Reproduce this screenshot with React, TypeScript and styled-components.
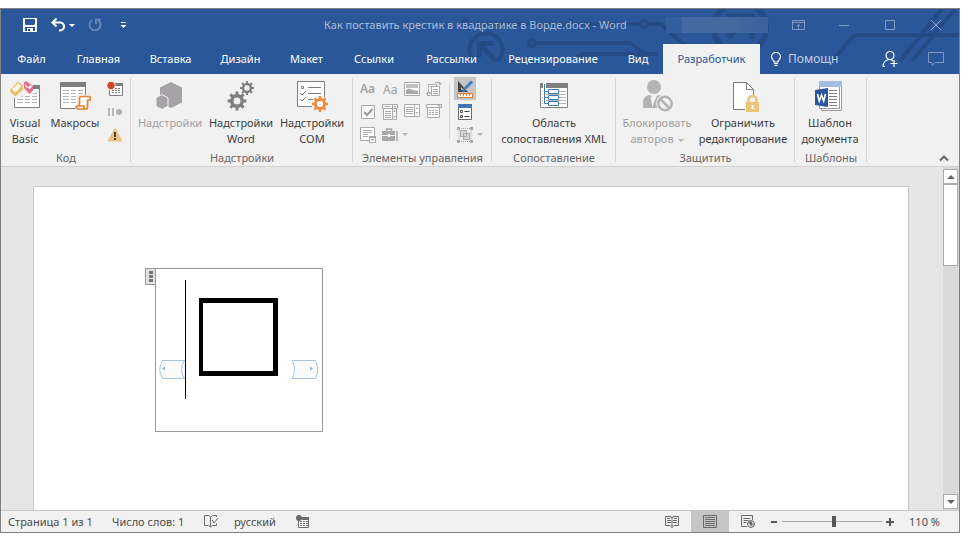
import React from "react";
import styled, { createGlobalStyle, css } from "styled-components";

const GlobalStyle = createGlobalStyle`
  *, *::before, *::after { box-sizing: border-box; }
  html, body, #root { height: 100%; }
  body {
    margin: 0;
    background: #fff;
    color: #3c3c3c;
    font: 11px/16px "Noto Sans", "Open Sans", sans-serif;
  }
  button, input {
    font: inherit;
    color: inherit;
    margin: 0;
    padding: 0;
    border: 0;
    background: none;
  }
`;

const Window = styled.main`
  display: flex;
  flex-direction: column;
  height: calc(100vh - 16px);
  margin: 8px 8px 8px 0;
  border: 1px solid #808080;
  background: #f1f1f1;
  white-space: nowrap;
`;

/* Header */

const Header = styled.header`
  position: relative;
  flex: none;
  background: #2a579a;
  color: #fff;
  overflow: hidden;
`;

const Circuit = styled.svg`
  position: absolute;
  top: 0;
  right: 0;
`;

const TitleBar = styled.div`
  position: relative;
  display: grid;
  grid-template-columns: 323px 1fr auto;
  align-items: center;
  height: 32px;
`;

const QuickAccess = styled.div`
  display: flex;
  align-items: center;
  padding-left: 21px;
`;

const IconButton = styled.button<{ $w: number; $h?: number; $active?: boolean }>`
  display: flex;
  flex: none;
  align-items: center;
  justify-content: center;
  width: ${(p) => p.$w}px;
  height: ${(p) => p.$h ?? 23}px;
  background: ${(p) => (p.$active ? "#c5c5c5" : "none")};
`;

const Title = styled.h1`
  margin: 0;
  color: #a9bcd8;
  font-size: 11px;
  font-weight: 400;
`;

const WindowTools = styled.div`
  display: flex;
  align-items: center;
`;

const Account = styled.div`
  width: 102px;
  height: 16px;
  margin-right: 7px;
  background: linear-gradient(90deg, #345f9f 16px, #4269a3 16px, #46699f 60px, #3a629f);
`;

const TabBar = styled.nav`
  position: relative;
  display: flex;
  height: 33px;
  padding-top: 3px;
`;

const Tab = styled.button<{ $w: number; $active?: boolean }>`
  flex: none;
  width: ${(p) => p.$w}px;
  ${(p) =>
    p.$active &&
    css`
      background: #f1f1f1;
      color: #2a579a;
    `}
`;

const Assistant = styled.label`
  display: flex;
  flex: 1;
  align-items: center;
  gap: 6px;
  padding-left: 10px;
`;

const AssistantInput = styled.input`
  width: 60px;
  font-size: 12px;
  &::placeholder { color: #c3d0e4; opacity: 1; }
`;

/* Ribbon */

const Ribbon = styled.section`
  display: flex;
  flex: none;
  height: 93px;
  border-bottom: 1px solid #d2d2d2;
`;

const Group = styled.section<{ $w: number }>`
  position: relative;
  display: flex;
  flex: none;
  flex-direction: column;
  justify-content: space-between;
  width: ${(p) => p.$w}px;
  &::after {
    content: "";
    position: absolute;
    top: 4px;
    right: 0;
    bottom: 4px;
    width: 1px;
    background: #d4d4d4;
  }
`;

const GroupBody = styled.div<{ $pad?: number; $gap?: number; $center?: boolean }>`
  display: flex;
  gap: ${(p) => p.$gap ?? 0}px;
  justify-content: ${(p) => (p.$center ? "center" : "flex-start")};
  padding: 3px 0 0 ${(p) => p.$pad ?? 0}px;
`;

const GroupLabel = styled.h2`
  margin: 0;
  color: #666;
  font-size: 11px;
  font-weight: 400;
  text-align: center;
`;

const LargeButton = styled.button<{ $w: number; $muted?: boolean }>`
  display: flex;
  flex: none;
  flex-direction: column;
  align-items: center;
  width: ${(p) => p.$w}px;
  padding-top: 3px;
  color: ${(p) => (p.$muted ? "#a0a0a0" : "inherit")};
  line-height: 16px;
  svg { flex: none; margin-bottom: 3px; }
`;

const SmallColumn = styled.div`
  display: flex;
  flex-direction: column;
`;

const ControlGrid = styled.div`
  display: grid;
  grid-template-columns: repeat(4, 22px);
  grid-auto-rows: 23px;
`;

const Divider = styled.span`
  width: 1px;
  margin: 7px 4px;
  background: #d4d4d4;
`;

const Caret = styled.span<{ $color?: string }>`
  display: inline-block;
  flex: none;
  margin-left: 4px;
  border: 3px solid transparent;
  border-top-color: ${(p) => p.$color ?? "#b5b5b5"};
  border-bottom: 0;
  vertical-align: middle;
`;

const Collapse = styled.button`
  display: flex;
  align-self: flex-end;
  margin: 0 10px 4px auto;
`;

/* Document */

const Workspace = styled.div`
  display: flex;
  flex: 1;
  min-height: 0;
  background: #e6e6e6;
`;

const Page = styled.article`
  flex: 1;
  margin: 19px 34px 0 32px;
  padding: 81px 0 0 111px;
  border: 1px solid #c6c6c6;
  border-bottom: 0;
  background: #fff;
  overflow: hidden;
`;

const ContentControl = styled.div`
  display: flex;
  align-items: flex-start;
`;

const Handle = styled.button`
  display: flex;
  flex-direction: column;
  align-items: center;
  justify-content: space-between;
  width: 10px;
  height: 17px;
  padding: 2px 0;
  border: 1px solid #999;
  border-right: 0;
  background: #e1e1e1;
`;

const HandleDot = styled.span`
  width: 4px;
  height: 3px;
  background: #777;
`;

const ControlFrame = styled.div`
  display: flex;
  width: 168px;
  height: 164px;
  padding: 11px 3px 0;
  border: 1px solid #999;
`;

const TextCursor = styled.span`
  width: 1px;
  height: 119px;
  background: #000;
`;

const Bracket = styled.svg`
  flex: none;
  margin-top: 80px;
`;

const CheckBox = styled.input`
  appearance: none;
  width: 79px;
  height: 78px;
  margin: 18px 13px 0 13px;
  border: solid #000;
  border-width: 5px 5px 5px 4px;
`;

const Scrollbar = styled.div`
  display: flex;
  flex-direction: column;
  width: 16px;
  padding: 2px 1px 1px 0;
  background: #dadada;
`;

const ScrollButton = styled.button`
  display: flex;
  flex: none;
  align-items: center;
  justify-content: center;
  height: 15px;
  border: 1px solid #ababab;
  background: #fff;
`;

const ScrollTrack = styled.div`
  flex: 1;
`;

const ScrollThumb = styled.div`
  height: 82px;
  border: 1px solid #ababab;
  background: #fff;
`;

/* Status bar */

const StatusBar = styled.footer`
  display: flex;
  flex: none;
  align-items: center;
  height: 22px;
  border-top: 1px solid #c6c6c6;
  padding-left: 7px;
  color: #4c4c4c;
`;

const StatusItem = styled.span<{ $w: number }>`
  flex: none;
  width: ${(p) => p.$w}px;
`;

const Spacer = styled.span`
  flex: 1;
`;

const Zoom = styled.input`
  appearance: none;
  width: 100px;
  height: 12px;
  margin: 0 4px 0 1px;
  background: linear-gradient(#a6a6a6, #a6a6a6) center / 100% 1px no-repeat;
  &::-webkit-slider-thumb {
    appearance: none;
    width: 4px;
    height: 11px;
    background: #555;
  }
`;

const ZoomButton = styled(IconButton)`
  &:first-of-type { margin-left: 2px; }
`;

const ZoomValue = styled.button`
  width: 65px;
  padding-right: 4px;
`;

/* Icons */

type IconProps = { size?: number; h?: number; children: React.ReactNode };
const Icon = ({ size = 16, h = size, children }: IconProps) => (
  <svg width={size} height={h} viewBox={`0 0 ${size} ${h}`} fill="none" aria-hidden="true">
    {children}
  </svg>
);

function gearPath(cx: number, cy: number, r: number, hole: number, teeth = 8) {
  const inner = r * 0.74;
  const step = (Math.PI * 2) / teeth;
  const pts: string[] = [];
  for (let i = 0; i < teeth; i++) {
    const a = i * step;
    [
      [inner, -0.26],
      [r, -0.19],
      [r, 0.19],
      [inner, 0.26],
    ].forEach(([rad, k]) => {
      const t = a + k * step;
      pts.push(`${(cx + rad * Math.cos(t)).toFixed(2)} ${(cy + rad * Math.sin(t)).toFixed(2)}`);
    });
  }
  return `M${pts.join("L")}ZM${cx - hole} ${cy}a${hole} ${hole} 0 1 0 ${hole * 2} 0a${hole} ${hole} 0 1 0 ${-hole * 2} 0Z`;
}

const SaveIcon = () => (
  <Icon size={14}>
    <path fill="#fff" fillRule="evenodd" d="M0 0h14v14H0zM2 1v5l1 1h8l1-1V1zM2 9v4h2V10h6v3h2V9zM5 11v2h2v-2z" />
  </Icon>
);
const UndoIcon = () => (
  <Icon size={14}>
    <path d="M1.5 4.5H9a4 4 0 0 1 0 8H8" stroke="#fff" strokeWidth="2.2" />
    <path d="M5.5.5l-4 4 4 4" stroke="#fff" strokeWidth="2.2" />
  </Icon>
);
const RedoIcon = () => (
  <Icon size={14}>
    <path d="M4 2.2a5.5 5.5 0 1 0 6 0M8 6V1.5h5" stroke="#6384b5" strokeWidth="2" />
  </Icon>
);
const QuickMenuIcon = () => (
  <Icon size={7}>
    <path d="M1 .5h5" stroke="#fff" />
    <path d="M.5 3h6l-3 3z" fill="#fff" />
  </Icon>
);
const RibbonOptionsIcon = () => (
  <Icon size={13} h={10}>
    <path d="M.5.5h12v9H.5zM1 2.5h11M6.5 9V4.5M4.5 6.5l2-2 2 2" stroke="#7f9ac2" />
  </Icon>
);
const MinimizeIcon = () => (
  <Icon size={10}><path d="M0 5.5h10" stroke="#7f9ac2" /></Icon>
);
const MaximizeIcon = () => (
  <Icon size={10}><path d="M.5.5h9v9h-9z" stroke="#7f9ac2" /></Icon>
);
const CloseIcon = () => (
  <Icon size={10}><path d="M0 0l10 10M10 0L0 10" stroke="#8fa7cb" /></Icon>
);
const BulbIcon = () => (
  <Icon size={12} h={14}>
    <path d="M4 10c0-2-2.5-3-2.5-5.3a4.5 4.2 0 0 1 9 0C10.5 7 8 8 8 10zM4 11.5h4M4.5 13.3h3" stroke="#fff" strokeWidth="1.2" />
  </Icon>
);
const ShareIcon = () => (
  <Icon size={16}>
    <circle cx="8" cy="4.5" r="4" stroke="#fff" strokeWidth="1.2" />
    <path d="M1 15.5c0-3.500 2.5-6.500 6-7M9 8.5l2 1.5M12 9v7M8.5 12.5h7M1 15.5h2" stroke="#fff" strokeWidth="1.2" />
  </Icon>
);
const CommentIcon = () => (
  <Icon size={16} h={14}>
    <path d="M.5.5h15v10H7l-3 3v-3H.5z" stroke="#7f9ac2" />
  </Icon>
);

const VisualBasicIcon = () => (
  <Icon size={32}>
    <path fill="#fff" stroke="#7f7f7f" d="M5.5 6.5h25v21h-25z" />
    <path fill="#7f7f7f" d="M5 5h26v4H5z" />
    <path stroke="#b5b5b5" d="M8 13.5h6M16 13.5h5M23 13.5h5M8 16.5h6M16 16.5h5M23 16.5h5M8 19.5h6M16 19.5h5M23 19.5h5M8 22.5h6M16 22.5h5M23 22.5h5" />
    <path fill="#f1f1f1" d="M0 9l9-9h15v14h-7l-7 4H5z" />
    <path fill="#e8c070" d="M1 10l8-8.5 5 4v4l-7.500 7L1 12z" />
    <path fill="#fff8e6" d="M3 9.5l6-6 3.5 2.5-6 6.500z" />
    <path fill="#e56b86" d="M15 3l2-2 7 5v4l-3.5 4L15 8z" />
    <path fill="#fff" d="M19 7.5L21.5 5l1.5 1.5-2.5 3z" />
    <path fill="#fbd9e0" d="M16 4l3 2.5-.5 2L16 6.500z" />
  </Icon>
);
const MacrosIcon = () => (
  <Icon size={32}>
    <path fill="#fff" stroke="#7f7f7f" d="M1.5 2.5h25v26h-25z" />
    <path fill="#7f7f7f" d="M1 2h26v5H1z" />
    <path stroke="#b5b5b5" d="M4 10.5h6M12 10.5h5M19 10.5h5M4 13.5h6M12 13.5h5M19 13.5h5M4 16.5h6M12 16.5h5M4 19.5h6M12 19.5h5M4 22.5h6M12 22.5h5" />
    <path fill="#f1f1f1" d="M18 15h14v16H16v-6h2z" />
    <path d="M20.5 26V18.5a2 2 0 0 1 2-2h7a2 2 0 0 1 2 2v1.5h-3v7a2 2 0 0 1-2 2H19a2 2 0 0 1-1.5-3H25v1a2 2 0 0 0 2 2" fill="#fff" stroke="#e58333" strokeWidth="1.7" />
  </Icon>
);
const RecordIcon = () => (
  <Icon>
    <path d="M2.5 3.5h13v11h-13z" fill="#fff" stroke="#7f7f7f" />
    <path d="M2 2h14v3H2z" fill="#7f7f7f" />
    <path d="M5 7.5h2M8 7.5h2M11 7.5h2M5 9.5h2M8 9.5h2M11 9.5h2M5 11.5h2M8 11.5h2M11 11.5h2" stroke="#7f7f7f" />
    <circle cx="4" cy="4.5" r="4.2" fill="#d24726" stroke="#f1f1f1" />
  </Icon>
);
const PauseIcon = () => (
  <Icon>
    <path d="M1 4h2v8H1zM5 4h2v8H5z" fill="#b8b8b8" />
    <circle cx="12" cy="8" r="3" fill="#b0b0b0" />
  </Icon>
);
const WarningIcon = () => (
  <Icon>
    <path d="M8 1.5L15 14H1z" fill="#eac282" stroke="#eac282" strokeLinejoin="round" />
    <path d="M8 5v5M8 11v2" stroke="#444" strokeWidth="2" />
  </Icon>
);
const HexIcon = () => (
  <Icon size={32}>
    <path d="M17 2l11 5.5v15L17 28 6 22.5v-15z" fill="#a6a3a6" />
    <path d="M8 14.5l6 3.3v8.4l-6 3.3-6-3.3v-8.4z" fill="#a6a3a6" stroke="#f1f1f1" />
  </Icon>
);
const GearsIcon = () => (
  <Icon size={32}>
    <path d={gearPath(12, 21, 9.5, 3.5)} fill="#7f7f7f" fillRule="evenodd" />
    <path d={gearPath(22, 8, 7, 2.7)} fill="#7f7f7f" fillRule="evenodd" />
  </Icon>
);
const ComIcon = () => (
  <Icon size={32}>
    <path d="M1.5 1.5h27v25h-27z" fill="#fff" stroke="#7f7f7f" />
    <path d="M5.5 6.5h2v2h-2zM4 13l2 2 4-4M4 19l2 2 4-4" stroke="#7f7f7f" />
    <path d="M12 7.5h13M12 13.5h13M12 19.5h5" stroke="#7f7f7f" />
    <circle cx="24" cy="24" r="8.5" fill="#f1f1f1" />
    <path d={gearPath(24, 24, 8, 3)} fill="#e98b3e" fillRule="evenodd" />
    <circle cx="24" cy="24" r="3" fill="#fff" />
  </Icon>
);

const gray = "#aaa8aa";
const RichTextIcon = () => (
  <Icon>
    <text x="0" y="12" fontSize="12" fontWeight="600" fill="#a0a0a0">Aa</text>
  </Icon>
);
const PlainTextIcon = () => (
  <Icon>
    <text x="1" y="13" fontSize="12" fill="#a0a0a0">Aa</text>
  </Icon>
);
const PictureIcon = () => (
  <Icon>
    <path d="M.5 1.5h15v13H.5z" fill="#fff" stroke={gray} />
    <path d="M2 3h12v4H2z" fill="#c4c2c4" />
    <path d="M2 9l3-1.5 4 1.5 5 1v3H2z" fill={gray} />
  </Icon>
);
const BuildingBlockIcon = () => (
  <Icon>
    <path d="M2.5 3.5h8v8h-8z" fill="#fff" stroke={gray} />
    <path d="M5.5 5.5h8v9h-8z" fill="#fff" stroke={gray} />
    <path d="M7 8.5h5M7 10.5h5M7 12.5h5M4 5.5h5M9 1.5h5V4M12 1l2 3 1.5-2M1.5 12v2.5h3M0 13l2-2 2 2" stroke={gray} />
  </Icon>
);
const CheckIcon = () => (
  <Icon>
    <path d="M1.5 1.5h13v13h-13z" fill="#faf8fa" stroke={gray} />
    <path d="M4 8l3 3 5.5-6" stroke="#999" strokeWidth="2" />
  </Icon>
);
const ComboIcon = () => (
  <Icon>
    <path d="M.5.5h15v4H.5zM1.5 4.5v11h13v-11M10.5.5v15" fill="#fff" stroke={gray} />
    <path d="M3 7.5h6M3 9.5h6M3 11.5h6M3 13.5h6M2.5 2.5h6" stroke={gray} />
    <path d="M11 8h3l-1.5-2zM11 12h3l-1.5 2zM11.5 2h3L13 4z" fill={gray} />
  </Icon>
);
const ListIcon = () => (
  <Icon>
    <path d="M.5.5h15v12H.5zM10.5.5v12" fill="#fff" stroke={gray} />
    <path d="M2 3.5h7M2 5.5h7M2 7.5h7M2 9.5h7" stroke={gray} />
    <path d="M11.5 5h3L13 3zM11.5 8h3L13 10z" fill={gray} />
  </Icon>
);
const DateIcon = () => (
  <Icon>
    <path d="M1.5 2.5h12v11h-12z" fill="#fff" stroke={gray} />
    <path d="M.5.5h15v3H.5z" fill="#fff" stroke={gray} />
    <path d="M3 6.5h2M6 6.5h2M9 6.5h3M3 8.5h2M6 8.5h2M9 8.5h3M3 10.5h2M6 10.5h2M9 10.5h3" stroke={gray} />
    <path d="M11 1h4l-2 2z" fill={gray} />
  </Icon>
);
const RepeatIcon = () => (
  <Icon>
    <path d="M.5.5h14v13H.5z" fill="#fff" stroke={gray} />
    <path d="M3 3.5h9M3 5.5h9M3 7.5h5M3 9.5h5" stroke={gray} />
    <path d="M9.5 9.5h6v6h-6z" fill="#fff" stroke={gray} />
    <path d="M9 9h7v2H9zM10.5 12h4l-2 2z" fill={gray} />
  </Icon>
);
const LegacyToolsIcon = () => (
  <Icon>
    <path d="M0 4h13v4H0zM0 9h13v5H0z" fill={gray} />
    <path d="M4.5 4V2h5v2M15 4v10" stroke={gray} strokeWidth="1.5" />
    <path d="M6 7h2v3H6z" fill="#fff" />
  </Icon>
);
const DesignModeIcon = () => (
  <Icon size={18}>
    <path d="M2 1v11h10z" fill="#444" />
    <path d="M5 7v3h3z" fill="#c5c5c5" />
    <path d="M16 1.5L9 8.5" stroke="#c5c5c5" strokeWidth="5" />
    <path d="M16 1.5L9 8.5" stroke="#3f7fc0" strokeWidth="3" />
    <path d="M7 8l3 3-4 1z" fill="#3f7fc0" />
    <path d="M1 13h16v5H1z" fill="#e87722" />
    <path d="M2 14h14v3H2z" fill="#fff" />
    <path d="M4.500 14v2M7.500 14v2M10.500 14v2M13.500 14v2" stroke="#e87722" />
  </Icon>
);
const PropertiesIcon = () => (
  <Icon>
    <path d="M1.5 1.5h13v14h-13z" fill="#fff" stroke="#6a6a6a" />
    <path d="M1 0h14v4H1z" fill="#3f78b8" />
    <path d="M7.5 7.5h5M7.5 12.5h5" stroke="#444" />
    <path d="M3.5 6.5h2v2h-2zM3.5 11.5h2v2h-2z" stroke="#555" />
  </Icon>
);
const GroupIcon = () => (
  <Icon>
    <path d="M2 1.5h12v13H2z" stroke={gray} strokeDasharray="1 1" />
    <path d="M3.5 3.5h6v6h-6zM6.5 6.5h6v6h-6z" fill="#dad8da" stroke={gray} />
    <path d="M0 0h3v3H0zM13 0h3v3h-3zM0 13h3v3H0zM13 13h3v3h-3z" fill={gray} />
  </Icon>
);
const XmlIcon = () => (
  <Icon size={32}>
    <path d="M2.5 3.5h27v24h-27z" fill="#fff" stroke="#7f7f7f" />
    <path d="M2 3h28v5H2z" fill="#7f7f7f" />
    <path d="M4 11.5h24M4 14.5h24M4 17.5h24M4 20.5h24M4 23.5h24" stroke="#b5b5b5" />
    <path d="M6.5 3v21.5h5" stroke="#fff" strokeWidth="3" />
    <path d="M6.5 4v19.5h4M6.5 11.5h4M6.5 17.5h4" stroke="#3f7ab8" />
    <path d="M10.5 9.5h10v4h-10zM10.5 15.5h10v4h-10zM10.5 21.5h10v4h-10z" fill="#fff" stroke="#3f7ab8" />
  </Icon>
);
const BlockIcon = () => (
  <Icon size={32}>
    <circle cx="13" cy="7" r="7" fill="#b5b3b5" />
    <path d="M2 28v-5c0-5 3-8 7-8l4 4 4-4c4 0 7 3 7 8v5z" fill="#b5b3b5" />
    <path d="M9.5 17l2 10 2-6 2-4" fill="#f1f1f1" />
    <circle cx="24" cy="23.5" r="9" fill="#f1f1f1" />
    <circle cx="24" cy="23.5" r="6.7" stroke="#b5b3b5" strokeWidth="2.5" />
    <path d="M19 19l10 9.5" stroke="#b5b3b5" strokeWidth="2.5" />
  </Icon>
);
const RestrictIcon = () => (
  <Icon size={32}>
    <path d="M6.5 2.5h13l7 7v20h-20z" fill="#fff" stroke="#7f7f7f" />
    <path d="M19.5 2.5v7h7" stroke="#7f7f7f" />
    <path d="M18 19l4-4h7l3 4v13H18z" fill="#f1f1f1" />
    <path d="M21.5 22v-2a4 4 0 0 1 8 0v2" stroke="#eec47a" strokeWidth="2.5" />
    <path d="M19 22h13v10H19z" fill="#eec47a" />
    <path d="M25.5 25v4" stroke="#fff" strokeWidth="2" />
  </Icon>
);
const TemplateIcon = () => (
  <Icon size={32}>
    <path d="M7.5 3.5h20v27h-20z" fill="#fff" stroke="#999" />
    <path d="M5.5 1.5h20v27h-20z" fill="#fff" stroke="#999" />
    <path d="M5 1h23v6H5z" fill="#a4bde3" />
    <path d="M15 10.5h8M15 13.5h8M15 16.5h8M15 19.5h8M15 22.5h8M15 25.5h8" stroke="#7f7f7f" />
    <path d="M1 10l13-2v19L1 25z" fill="#2a579a" />
    <path d="M3.5 14l1.8 7 2.2-6 2.2 6 1.8-7" stroke="#fff" strokeWidth="1.6" />
  </Icon>
);
const ChevronIcon = () => (
  <Icon size={10} h={7}><path d="M1 5.5l4-4 4 4" stroke="#666" strokeWidth="2" /></Icon>
);

const ProofIcon = () => (
  <Icon>
    <path d="M7.5 12.5V3L5.5 1.5h-4v10h4l2 1.5 2-1.5h4v-2M7.5 3l2-1.5h4V3M9 6l2 3 4-5" stroke="#6a6a6a" />
  </Icon>
);
const StatusMacroIcon = () => (
  <Icon>
    <path d="M3.5 4.5h10v9h-10z" fill="#fff" stroke="#6a6a6a" />
    <path d="M7 3h7v3H7z" fill="#6a6a6a" />
    <path d="M5 7.5h2M8 7.5h2M11 7.5h2M5 9.5h2M8 9.5h2M11 9.5h2M5 11.5h2M8 11.5h2M11 11.5h2" stroke="#6a6a6a" />
    <circle cx="4" cy="4" r="3" fill="#6a6a6a" />
  </Icon>
);
const ReadIcon = () => (
  <Icon size={14}>
    <path d="M7 2.5L5 1.5H.5v9H5l2 2 2-2h4.5v-9H9zM7 2v10.5" stroke="#6a6a6a" />
    <path d="M2 3.5h3M2 5.5h4M2 7.5h4M9 3.5h3M8 5.5h4M8 7.5h4" stroke="#6a6a6a" />
  </Icon>
);
const PrintIcon = () => (
  <Icon size={14}>
    <path d="M.5.5h13v12H.5zM2 2.5h10M2 4.5h10M2 6.5h10M2 8.5h10M2 10.5h10" stroke="#6a6a6a" />
  </Icon>
);
const WebIcon = () => (
  <Icon size={14}>
    <path d="M6 11.5H.5V.5h11V5M2.5 3.5h7M2.5 5.5h5M2.5 7.5h3" stroke="#6a6a6a" />
    <circle cx="10" cy="9" r="3.5" fill="#dedede" stroke="#6a6a6a" />
    <path d="M8 7.5l2-1 1 2-1 2zM11 10.5l2-2" fill="#6a6a6a" stroke="#6a6a6a" />
  </Icon>
);

const CircuitArt = () => (
  <Circuit width="500" height="65" viewBox="0 0 500 65" fill="none" stroke="#244b86" strokeWidth="4" aria-hidden="true">
    <path d="M15 52A16.5 16.5 0 1 1 39 52" />
    <path d="M21 35L37 52M20.5 48V34.5H34" strokeWidth="5" />
    <circle cx="6" cy="14" r="3" strokeWidth="3" />
    <path d="M10 15H181" strokeWidth="3" />
    <circle cx="73" cy="34" r="3.5" strokeWidth="3" />
    <path d="M77 34H171L189 47" />
    <path d="M117 48q5-3 10-3H199" />
    <circle cx="185" cy="15" r="3.5" strokeWidth="3" />
    <path d="M189 15H202L240 49" />
    <circle cx="281" cy="19" r="26" strokeWidth="6" />
    <path d="M269 28L291 8M268 7H293V30" strokeWidth="6" />
    <path d="M374 52L393 28Q395 26 399 26H500" />
    <path d="M441 52L483 0M453 52L496 0" />
  </Circuit>
);

/* Data */

const tabs: { label: string; w: number; active?: boolean }[] = [
  { label: "Файл", w: 61 },
  { label: "Главная", w: 73 },
  { label: "Вставка", w: 71 },
  { label: "Дизайн", w: 69 },
  { label: "Макет", w: 63 },
  { label: "Ссылки", w: 72 },
  { label: "Рассылки", w: 83 },
  { label: "Рецензирование", w: 120 },
  { label: "Вид", w: 50 },
  { label: "Разработчик", w: 97, active: true },
];

const controls = [
  { label: "Форматированный текст", icon: <RichTextIcon /> },
  { label: "Обычный текст", icon: <PlainTextIcon /> },
  { label: "Рисунок", icon: <PictureIcon /> },
  { label: "Стандартные блоки", icon: <BuildingBlockIcon /> },
  { label: "Флажок", icon: <CheckIcon /> },
  { label: "Поле со списком", icon: <ComboIcon /> },
  { label: "Раскрывающийся список", icon: <ListIcon /> },
  { label: "Выбор даты", icon: <DateIcon /> },
  { label: "Повторяющийся раздел", icon: <RepeatIcon /> },
];

export default function App() {
  return (
    <>
      <GlobalStyle />
      <Window>
        <Header>
          <CircuitArt />
          <TitleBar>
            <QuickAccess>
              <IconButton $w={16} aria-label="Сохранить"><SaveIcon /></IconButton>
              <IconButton $w={50} aria-label="Отменить"><UndoIcon /><Caret $color="#fff" /></IconButton>
              <IconButton $w={14} aria-label="Повторить"><RedoIcon /></IconButton>
              <IconButton $w={42} aria-label="Настройка панели"><QuickMenuIcon /></IconButton>
            </QuickAccess>
            <Title>Как поставить крестик в квадратике в Ворде.docx - Word</Title>
            <WindowTools>
              <Account />
              <IconButton $w={46} aria-label="Параметры ленты"><RibbonOptionsIcon /></IconButton>
              <IconButton $w={46} aria-label="Свернуть"><MinimizeIcon /></IconButton>
              <IconButton $w={46} aria-label="Развернуть"><MaximizeIcon /></IconButton>
              <IconButton $w={46} aria-label="Закрыть"><CloseIcon /></IconButton>
            </WindowTools>
          </TitleBar>
          <TabBar>
            {tabs.map((t) => (
              <Tab key={t.label} $w={t.w} $active={t.active}>{t.label}</Tab>
            ))}
            <Assistant>
              <BulbIcon />
              <AssistantInput type="text" placeholder="Помощн" aria-label="Помощник" />
            </Assistant>
            <IconButton $w={46} $h={30} aria-label="Общий доступ"><ShareIcon /></IconButton>
            <IconButton $w={46} $h={30} aria-label="Примечания"><CommentIcon /></IconButton>
          </TabBar>
        </Header>

        <Ribbon>
          <Group $w={130}>
            <GroupBody $pad={3}>
              <LargeButton $w={42}><VisualBasicIcon />Visual<br />Basic</LargeButton>
              <LargeButton $w={58}><MacrosIcon />Макросы</LargeButton>
              <SmallColumn>
                <IconButton $w={22} aria-label="Запись макроса"><RecordIcon /></IconButton>
                <IconButton $w={22} aria-label="Пауза"><PauseIcon /></IconButton>
                <IconButton $w={22} aria-label="Безопасность макросов"><WarningIcon /></IconButton>
              </SmallColumn>
            </GroupBody>
            <GroupLabel>Код</GroupLabel>
          </Group>
          <Group $w={222}>
            <GroupBody $pad={4} $gap={1}>
              <LargeButton $w={70} $muted><HexIcon />Надстройки</LargeButton>
              <LargeButton $w={70}><GearsIcon />Надстройки<br />Word</LargeButton>
              <LargeButton $w={70}><ComIcon />Надстройки<br />COM</LargeButton>
            </GroupBody>
            <GroupLabel>Надстройки</GroupLabel>
          </Group>
          <Group $w={139}>
            <GroupBody $pad={4}>
              <ControlGrid>
                {controls.map((c) => (
                  <IconButton key={c.label} $w={22} aria-label={c.label}>{c.icon}</IconButton>
                ))}
                <IconButton $w={32} aria-label="Инструменты прежних версий"><LegacyToolsIcon /><Caret /></IconButton>
              </ControlGrid>
              <Divider />
              <SmallColumn>
                <IconButton $w={22} $active aria-label="Режим конструктора"><DesignModeIcon /></IconButton>
                <IconButton $w={22} aria-label="Свойства"><PropertiesIcon /></IconButton>
                <IconButton $w={32} aria-label="Группировать"><GroupIcon /><Caret /></IconButton>
              </SmallColumn>
            </GroupBody>
            <GroupLabel>Элементы управления</GroupLabel>
          </Group>
          <Group $w={124}>
            <GroupBody $center>
              <LargeButton $w={120}><XmlIcon />Область<br />сопоставления XML</LargeButton>
            </GroupBody>
            <GroupLabel>Сопоставление</GroupLabel>
          </Group>
          <Group $w={179}>
            <GroupBody $pad={1}>
              <LargeButton $w={80} $muted><BlockIcon />Блокировать<span>авторов<Caret /></span></LargeButton>
              <LargeButton $w={92}><RestrictIcon />Ограничить<br />редактирование</LargeButton>
            </GroupBody>
            <GroupLabel>Защитить</GroupLabel>
          </Group>
          <Group $w={72}>
            <GroupBody $pad={1}>
              <LargeButton $w={68}><TemplateIcon />Шаблон<br />документа</LargeButton>
            </GroupBody>
            <GroupLabel>Шаблоны</GroupLabel>
          </Group>
          <Collapse aria-label="Свернуть ленту"><ChevronIcon /></Collapse>
        </Ribbon>

        <Workspace>
          <Page>
            <ContentControl>
              <Handle aria-label="Переместить"><HandleDot /><HandleDot /><HandleDot /></Handle>
              <ControlFrame>
                <Bracket width="26" height="20" viewBox="0 0 26 20" fill="none">
                  <path d="M26 .5H3.5Q-2 10 3.5 18.5H26M25 1Q20 10 25 18" fill="#fbfbfb" stroke="#a5c3df" />
                  <path d="M6 6.5v4l-3-2z" fill="#8db3d9" />
                </Bracket>
                <TextCursor />
                <CheckBox type="checkbox" aria-label="Флажок документа" />
                <Bracket width="27" height="20" viewBox="0 0 27 20" fill="none">
                  <path d="M1 .5H24.5Q29 10 24.5 18.5H1Q6 10 1 .5z" fill="#fbfbfb" stroke="#a5c3df" />
                  <path d="M19 6.5v4l3-2z" fill="#8db3d9" />
                </Bracket>
              </ControlFrame>
            </ContentControl>
          </Page>
          <Scrollbar>
            <ScrollButton aria-label="Вверх">
              <Icon size={8} h={4}><path d="M0 4h8L4 0z" fill="#666" /></Icon>
            </ScrollButton>
            <ScrollTrack><ScrollThumb /></ScrollTrack>
            <ScrollButton aria-label="Вниз">
              <Icon size={8} h={4}><path d="M0 0h8L4 4z" fill="#666" /></Icon>
            </ScrollButton>
          </Scrollbar>
        </Workspace>

        <StatusBar>
          <StatusItem $w={104}>Страница 1 из 1</StatusItem>
          <StatusItem $w={76}>Число слов: 1</StatusItem>
          <IconButton $w={46} $h={21} aria-label="Правописание"><ProofIcon /></IconButton>
          <StatusItem $w={57}>русский</StatusItem>
          <IconButton $w={24} $h={21} aria-label="Макросы"><StatusMacroIcon /></IconButton>
          <Spacer />
          <IconButton $w={38} $h={21} aria-label="Режим чтения"><ReadIcon /></IconButton>
          <IconButton $w={38} $h={21} $active aria-label="Разметка страницы"><PrintIcon /></IconButton>
          <IconButton $w={38} $h={21} aria-label="Веб-документ"><WebIcon /></IconButton>
          <ZoomButton $w={14} $h={21} aria-label="Уменьшить">
            <Icon size={6}><path d="M0 3h6" stroke="#555" strokeWidth="2" /></Icon>
          </ZoomButton>
          <Zoom type="range" min={0} max={100} defaultValue={52} aria-label="Масштаб" />
          <ZoomButton $w={8} $h={21} aria-label="Увеличить">
            <Icon size={8}><path d="M0 4h8M4 0v8" stroke="#555" strokeWidth="2" /></Icon>
          </ZoomButton>
          <ZoomValue>110 %</ZoomValue>
        </StatusBar>
      </Window>
    </>
  );
}
